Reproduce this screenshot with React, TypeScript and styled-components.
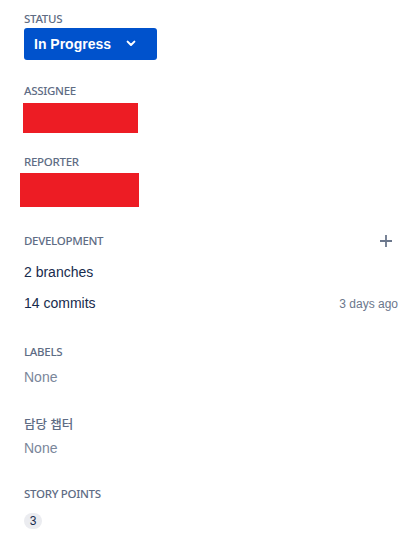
import React from "react";
import styled, { createGlobalStyle } from "styled-components";

const GlobalStyle = createGlobalStyle`
  html, body {
    margin: 0;
    padding: 0;
    background: #ffffff;
  }
  * { box-sizing: border-box; }
`;

const Panel = styled.div`
  display: flex;
  flex-direction: column;
  width: 420px;
  padding: 11px 22px 20px 24px;
  font-family: "Liberation Sans", Arial, sans-serif;
  color: #172b4d;
`;

const Field = styled.section<{ $mt?: number }>`
  display: flex;
  flex-direction: column;
  align-items: flex-start;
  margin-top: ${(p) => p.$mt ?? 0}px;
`;

const Label = styled.div<{ $mb?: number; $cjk?: boolean }>`
  font-family: "Noto Sans", "Noto Sans CJK KR", sans-serif;
  font-size: ${(p) => (p.$cjk ? 12.5 : 11.5)}px;
  line-height: 16px;
  font-weight: 500;
  letter-spacing: ${(p) => (p.$cjk ? "0" : "-0.3px")};
  color: #5e6c84;
  text-transform: ${(p) => (p.$cjk ? "none" : "uppercase")};
  margin-bottom: ${(p) => p.$mb ?? 0}px;
`;

const StatusButton = styled.button`
  display: inline-flex;
  align-items: center;
  height: 32px;
  padding: 0 18px 0 10px;
  gap: 12px;
  border: none;
  border-radius: 3px;
  background: #0052cc;
  color: #ffffff;
  font-family: "Liberation Sans", Arial, sans-serif;
  font-size: 14px;
  font-weight: 700;
  cursor: pointer;
  svg { display: block; }
`;

const Redacted = styled.div<{ $w: number; $h: number; $ml: number }>`
  width: ${(p) => p.$w}px;
  height: ${(p) => p.$h}px;
  margin-left: ${(p) => p.$ml}px;
  background: #ed1c24;
`;

const HeaderRow = styled.div`
  display: flex;
  align-items: center;
  justify-content: space-between;
  align-self: stretch;
  height: 24px;
  margin-bottom: 9px;
`;

const IconButton = styled.button`
  width: 24px;
  height: 24px;
  padding: 0;
  border: none;
  background: transparent;
  color: #6b778c;
  display: flex;
  align-items: center;
  justify-content: center;
  cursor: pointer;
  svg { display: block; }
`;

const DevRow = styled.div<{ $mt?: number }>`
  display: flex;
  align-items: baseline;
  justify-content: space-between;
  align-self: stretch;
  margin-top: ${(p) => p.$mt ?? 0}px;
  font-size: 14px;
  line-height: 20px;
  color: #172b4d;
`;

const Meta = styled.span`
  font-size: 12px;
  color: #6b778c;
`;

const EmptyValue = styled.div`
  font-size: 14px;
  line-height: 20px;
  color: #7a869a;
`;

const Badge = styled.span`
  display: inline-flex;
  align-items: center;
  justify-content: center;
  min-width: 18px;
  height: 16px;
  padding: 0 5px;
  border-radius: 8px;
  background: #ebecf0;
  color: #172b4d;
  font-size: 12px;
  line-height: 16px;
`;

const Chevron = () => (
  <svg width="16" height="16" viewBox="0 0 16 16" fill="none">
    <path d="M4.6 5.6 L8 9 L11.4 5.6" stroke="currentColor" strokeWidth="2" strokeLinecap="round" strokeLinejoin="round" />
  </svg>
);

const Plus = () => (
  <svg width="24" height="24" viewBox="0 0 24 24" fill="none">
    <path d="M12 6v12M6 12h12" stroke="currentColor" strokeWidth="1.8" />
  </svg>
);

export default function App() {
  return (
    <>
      <GlobalStyle />
      <Panel>
        <Field>
          <Label $mb={1}>Status</Label>
          <StatusButton>
            <span>In Progress</span>
            <Chevron />
          </StatusButton>
        </Field>

        <Field $mt={23}>
          <Label $mb={4}>Assignee</Label>
          <Redacted $w={115} $h={30} $ml={-1} />
        </Field>

        <Field $mt={21}>
          <Label $mb={3}>Reporter</Label>
          <Redacted $w={119} $h={34} $ml={-4} />
        </Field>

        <Field $mt={22}>
          <HeaderRow>
            <Label>Development</Label>
            <IconButton aria-label="Add">
              <Plus />
            </IconButton>
          </HeaderRow>
          <DevRow>
            <span>2 branches</span>
          </DevRow>
          <DevRow $mt={11}>
            <span>14 commits</span>
            <Meta>3 days ago</Meta>
          </DevRow>
        </Field>

        <Field $mt={30}>
          <Label $mb={7}>Labels</Label>
          <EmptyValue>None</EmptyValue>
        </Field>

        <Field $mt={30}>
          <Label $cjk $mb={5}>담당 챕터</Label>
          <EmptyValue>None</EmptyValue>
        </Field>

        <Field $mt={28}>
          <Label $mb={11}>Story Points</Label>
          <Badge>3</Badge>
        </Field>
      </Panel>
    </>
  );
}
